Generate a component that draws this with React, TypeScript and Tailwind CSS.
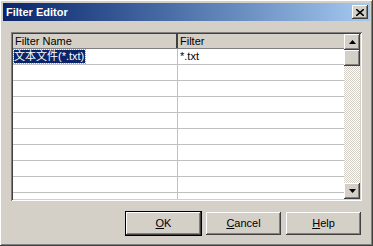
const font = { fontFamily: '"Liberation Sans", "Noto Sans CJK SC", sans-serif' };

const raised =
  "shadow-[inset_-1px_-1px_#404040,inset_1px_1px_#ffffff,inset_-2px_-2px_#808080,inset_2px_2px_#d4d0c8]";

function Btn({ label, u, rest, def }: { label: string; u: string; rest: string; def?: boolean }) {
  return (
    <div className={def ? "border border-black" : "p-px"}>
      <div
        className={`w-[75px] h-[23px] bg-[#d4d0c8] flex items-center justify-center text-[11px] text-black ${raised}`}
      >
        <span>
          <span className="underline">{u}</span>
          {rest}
        </span>
      </div>
    </div>
  );
}

function ScrollBtn({ up }: { up?: boolean }) {
  return (
    <div className={`w-[16px] h-[16px] bg-[#d4d0c8] flex items-center justify-center ${raised}`}>
      <svg width="7" height="4" viewBox="0 0 7 4">
        {up ? <path d="M3.5 0 L7 4 L0 4 Z" fill="#000" /> : <path d="M0 0 L7 0 L3.5 4 Z" fill="#000" />}
      </svg>
    </div>
  );
}

export default function App() {
  const rows = Array.from({ length: 9 });
  return (
    <div
      style={font}
      className={`w-[373px] h-[246px] bg-[#d4d0c8] p-[3px] flex flex-col ${raised}`}
    >
      <div className="h-[18px] bg-gradient-to-r from-[#0a246a] to-[#a6caf0] flex items-center justify-between pl-[3px] pr-[2px]">
        <span className="text-white font-bold text-[11px] leading-none">Filter Editor</span>
        <div className={`w-[16px] h-[14px] bg-[#d4d0c8] flex items-center justify-center ${raised}`}>
          <svg width="8" height="7" viewBox="0 0 8 7">
            <path d="M0 0 L8 7 M8 0 L0 7" stroke="#000" strokeWidth="1.6" />
          </svg>
        </div>
      </div>

      <div className="flex-1 flex flex-col px-[8px] pt-[11px] pb-[7px]">
        <div className="h-[169px] shadow-[inset_1px_1px_#808080,inset_-1px_-1px_#ffffff,inset_2px_2px_#404040,inset_-2px_-2px_#d4d0c8] p-[2px] flex bg-white">
          <div className="flex-1 flex flex-col overflow-hidden text-[11px] text-black">
            <div className="flex h-[15px] bg-[#d4d0c8] border-b border-[#808080]">
              <div className="w-[165px] pl-[2px] leading-[14px] border-r-2 border-[#404040]">Filter Name</div>
              <div className="flex-1 pl-[2px] leading-[14px]">Filter</div>
            </div>
            <div className="flex h-[16px] border-b border-[#c0c0c0]">
              <div className="w-[165px] pl-[1px] border-r border-[#c0c0c0] flex items-center">
                <span className="bg-[#0a246a] text-white leading-[13px] outline-1 outline-dotted outline-[#a0a0a0] pr-px">
                  文本文件(*.txt)
                </span>
              </div>
              <div className="flex-1 pl-[2px] leading-[15px]">*.txt</div>
            </div>
            {rows.map((_, i) => (
              <div key={i} className="flex h-[16px] shrink-0 border-b border-[#c0c0c0]">
                <div className="w-[165px] border-r border-[#c0c0c0]" />
                <div className="flex-1" />
              </div>
            ))}
          </div>
          <div className="w-[16px] flex flex-col bg-[repeating-conic-gradient(#ffffff_0_25%,#d4d0c8_0_50%)] bg-[length:2px_2px]">
            <ScrollBtn up />
            <div className={`h-[16px] bg-[#d4d0c8] ${raised}`} />
            <div className="flex-1" />
            <ScrollBtn />
          </div>
        </div>

        <div className="flex justify-end items-center gap-[3px] mt-[10px]">
          <Btn label="OK" u="O" rest="K" def />
          <Btn label="Cancel" u="C" rest="ancel" />
          <Btn label="Help" u="H" rest="elp" />
        </div>
      </div>
    </div>
  );
}
